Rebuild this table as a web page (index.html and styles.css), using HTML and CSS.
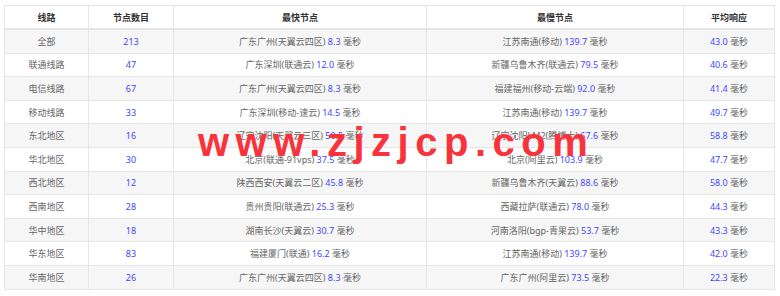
FILE: index.html
```html
<!DOCTYPE html>
<html lang="zh-CN">
<head>
    <meta charset="UTF-8">
    <title>节点延迟统计</title>
    <link rel="stylesheet" href="styles.css">
</head>
<body>
    <div class="wrap">
        <table class="ping-table">
            <colgroup>
                <col class="c-line">
                <col class="c-count">
                <col class="c-fast">
                <col class="c-slow">
                <col class="c-avg">
            </colgroup>
            <thead>
                <tr>
                    <th>线路</th>
                    <th>节点数目</th>
                    <th>最快节点</th>
                    <th>最慢节点</th>
                    <th>平均响应</th>
                </tr>
            </thead>
            <tbody>
                <tr>
                    <td>全部</td>
                    <td><span class="num">213</span></td>
                    <td>广东广州(天翼云四区) <span class="num">8.3</span> 毫秒</td>
                    <td>江苏南通(移动) <span class="num">139.7</span> 毫秒</td>
                    <td><span class="num">43.0</span> 毫秒</td>
                </tr>
                <tr>
                    <td>联通线路</td>
                    <td><span class="num">47</span></td>
                    <td>广东深圳(联通云) <span class="num">12.0</span> 毫秒</td>
                    <td>新疆乌鲁木齐(联通云) <span class="num">79.5</span> 毫秒</td>
                    <td><span class="num">40.6</span> 毫秒</td>
                </tr>
                <tr>
                    <td>电信线路</td>
                    <td><span class="num">67</span></td>
                    <td>广东广州(天翼云四区) <span class="num">8.3</span> 毫秒</td>
                    <td>福建福州(移动-云端) <span class="num">92.0</span> 毫秒</td>
                    <td><span class="num">41.4</span> 毫秒</td>
                </tr>
                <tr>
                    <td>移动线路</td>
                    <td><span class="num">33</span></td>
                    <td>广东深圳(移动-速云) <span class="num">14.5</span> 毫秒</td>
                    <td>江苏南通(移动) <span class="num">139.7</span> 毫秒</td>
                    <td><span class="num">49.7</span> 毫秒</td>
                </tr>
                <tr>
                    <td>东北地区</td>
                    <td><span class="num">16</span></td>
                    <td>辽宁沈阳(天翼云三区) <span class="num">50.5</span> 毫秒</td>
                    <td>辽宁沈阳LM2(腾博士) <span class="num">67.6</span> 毫秒</td>
                    <td><span class="num">58.8</span> 毫秒</td>
                </tr>
                <tr>
                    <td>华北地区</td>
                    <td><span class="num">30</span></td>
                    <td>北京(联通-91vps) <span class="num">37.5</span> 毫秒</td>
                    <td>北京(阿里云) <span class="num">103.9</span> 毫秒</td>
                    <td><span class="num">47.7</span> 毫秒</td>
                </tr>
                <tr>
                    <td>西北地区</td>
                    <td><span class="num">12</span></td>
                    <td>陕西西安(天翼云二区) <span class="num">45.8</span> 毫秒</td>
                    <td>新疆乌鲁木齐(天翼云) <span class="num">88.6</span> 毫秒</td>
                    <td><span class="num">58.0</span> 毫秒</td>
                </tr>
                <tr>
                    <td>西南地区</td>
                    <td><span class="num">28</span></td>
                    <td>贵州贵阳(联通云) <span class="num">25.3</span> 毫秒</td>
                    <td>西藏拉萨(联通云) <span class="num">78.0</span> 毫秒</td>
                    <td><span class="num">44.3</span> 毫秒</td>
                </tr>
                <tr>
                    <td>华中地区</td>
                    <td><span class="num">18</span></td>
                    <td>湖南长沙(天翼云) <span class="num">30.7</span> 毫秒</td>
                    <td>河南洛阳(bgp-青果云) <span class="num">53.7</span> 毫秒</td>
                    <td><span class="num">43.3</span> 毫秒</td>
                </tr>
                <tr>
                    <td>华东地区</td>
                    <td><span class="num">83</span></td>
                    <td>福建厦门(联通) <span class="num">16.2</span> 毫秒</td>
                    <td>江苏南通(移动) <span class="num">139.7</span> 毫秒</td>
                    <td><span class="num">42.0</span> 毫秒</td>
                </tr>
                <tr>
                    <td>华南地区</td>
                    <td><span class="num">26</span></td>
                    <td>广东广州(天翼云四区) <span class="num">8.3</span> 毫秒</td>
                    <td>广东广州(阿里云) <span class="num">73.5</span> 毫秒</td>
                    <td><span class="num">22.3</span> 毫秒</td>
                </tr>
            </tbody>
        </table>
        <div class="watermark">www.zjzjcp.com</div>
    </div>
</body>
</html>
```

FILE: styles.css
```css
body {
    margin: 0;
    background: #fff;
    font-family: "Noto Sans", "Noto Sans CJK SC", sans-serif;
}
.wrap {
    position: relative;
    padding: 5px 6px 0 4px;
}
.ping-table {
    width: 770px;
    border-collapse: collapse;
    table-layout: fixed;
    font-size: 9px;
    color: #666;
}
.c-line { width: 84px; }
.c-count { width: 85px; }
.c-fast { width: 253px; }
.c-slow { width: 257px; }
.c-avg { width: 91px; }
.ping-table th,
.ping-table td {
    border: 1px solid #e6e6e6;
    text-align: center;
    padding: 0;
    white-space: nowrap;
}
.ping-table th {
    height: 22px;
    color: #333;
    font-weight: bold;
    border-bottom: 2px solid #e6e6e6;
}
.ping-table td {
    height: 22.6px;
}
.ping-table tbody tr:nth-child(odd) {
    background: #f6f6f6;
}
.num {
    color: #4545ff;
}
.watermark {
    position: absolute;
    left: 198px;
    top: 120px;
    font-family: "Liberation Sans", Arial, sans-serif;
    font-weight: bold;
    font-size: 40px;
    letter-spacing: 6.5px;
    color: #f8333c;
}
```
